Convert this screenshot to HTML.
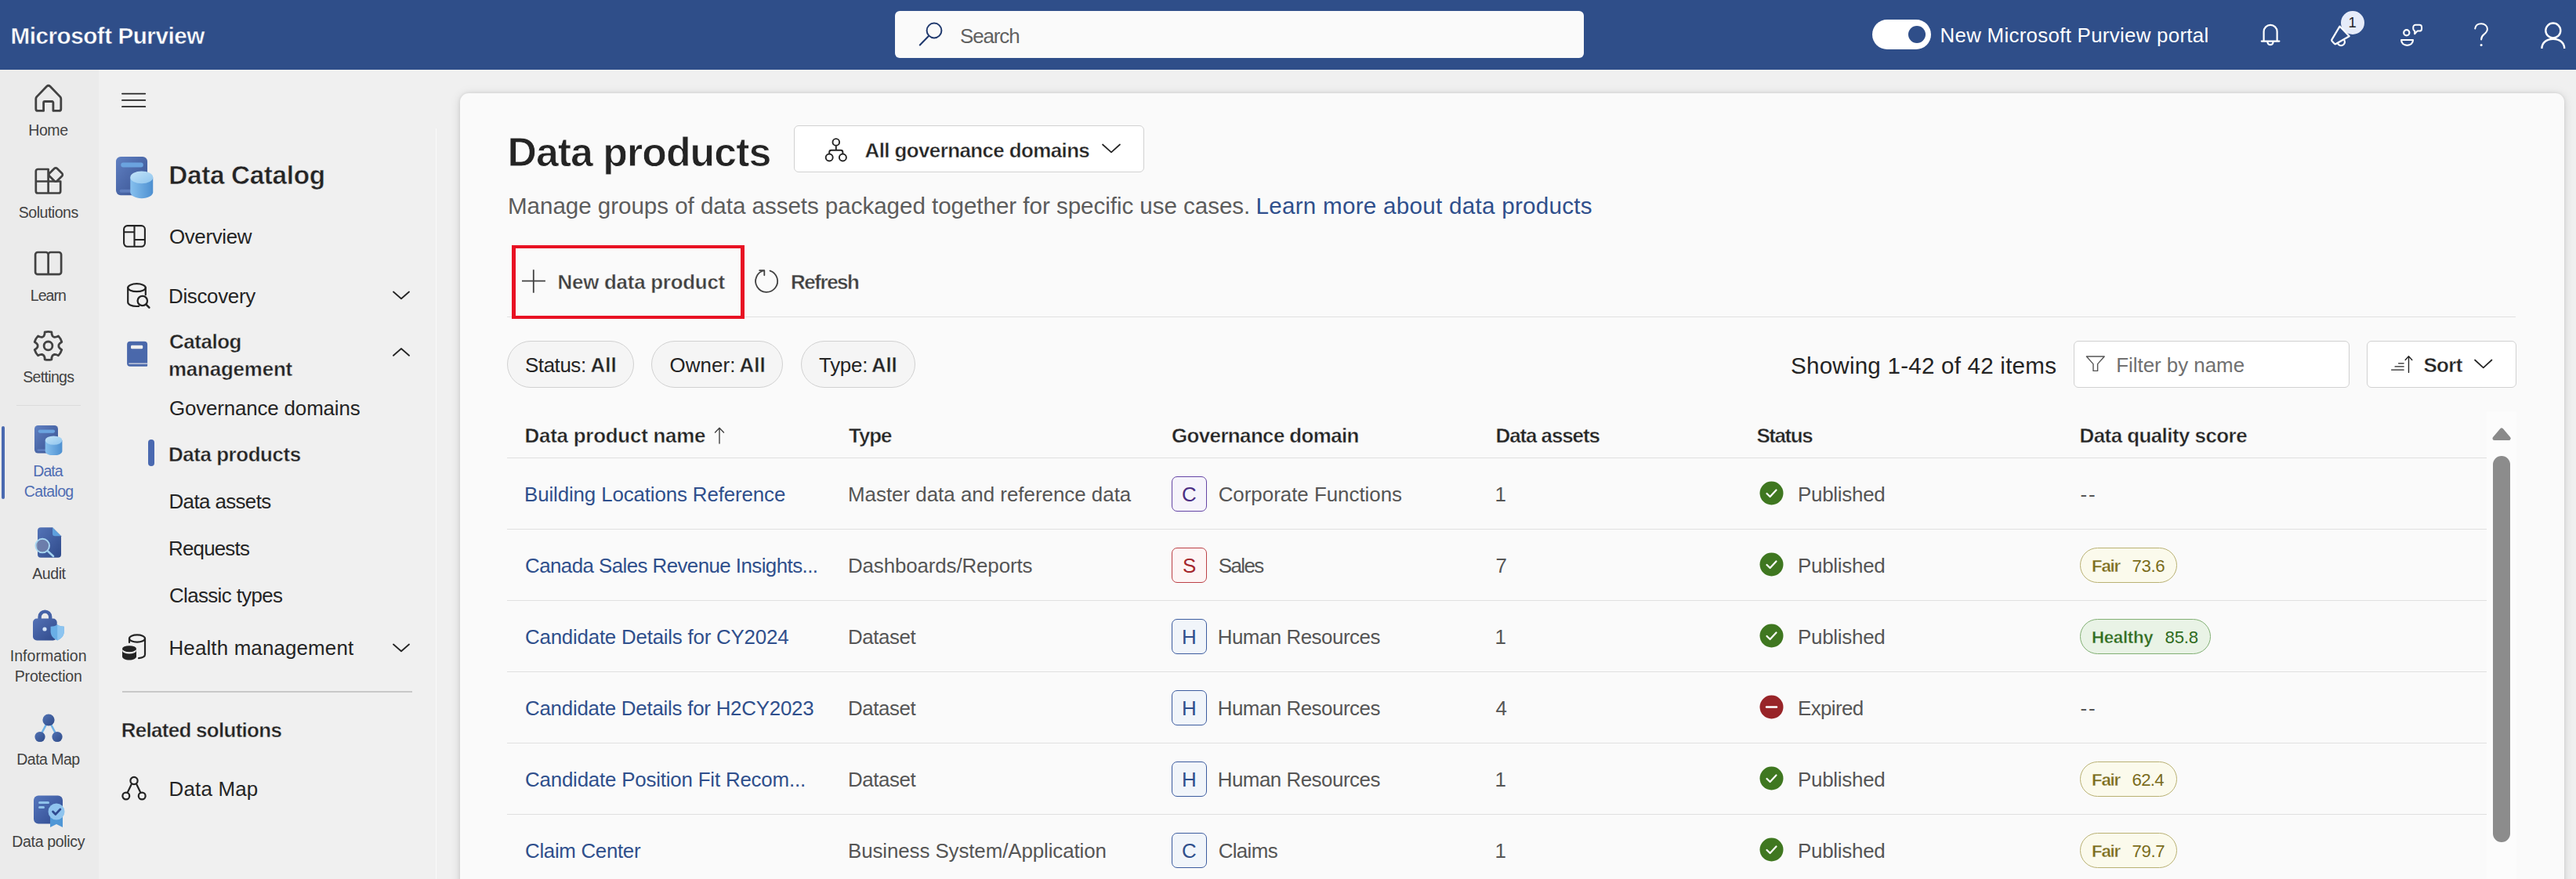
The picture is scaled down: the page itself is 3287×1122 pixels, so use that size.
<!DOCTYPE html>
<html lang="en"><head><meta charset="utf-8"><title>Data products - Microsoft Purview</title>
<style>
html,body{margin:0;padding:0;}
body{width:3287px;height:1122px;overflow:hidden;position:relative;background:#f0f0f0;font-family:"Liberation Sans", sans-serif;}
.a{position:absolute;box-sizing:border-box;}
.t{position:absolute;white-space:nowrap;line-height:1;margin:0;font-weight:400;text-decoration:none;}
</style></head><body>
<header class="sec-header">
<div class="a" style="left:0px;top:0px;width:3287px;height:89px;background:#2f4e89;"></div>
<div class="a" style="left:1142px;top:14px;width:879px;height:60px;background:#fafafa;border-radius:6px;"></div>
<div class="a" style="left:2389px;top:25px;width:75px;height:38px;background:#fff;border-radius:19px;"></div>
<div class="a" style="left:2435px;top:33px;width:22px;height:22px;background:#2f4e89;border-radius:11px;"></div>
<div class="a" style="left:2987px;top:14px;width:30px;height:30px;background:#e6ecfa;border-radius:15px;"></div>
<svg class="a" style="left:1170.5px;top:26.2px;" width="34" height="34" viewBox="0 0 34 34" fill="none"><circle cx="21" cy="13" r="9.4" stroke="#213a6e" stroke-width="2"/><path d="M14.200 19.800 L2.800 31.400" stroke="#213a6e" stroke-width="2.1" stroke-linecap="round"/></svg>
<svg class="a" style="left:2880px;top:26px;" width="34" height="36" viewBox="2880 26 34 36" fill="none"><path d="M2888.6 52.600 V40.4 a8.500 8.500 0 0 1 17 0 V52.600 M2885.8 52.600 H2908.4 M2893.4 53.6 a3.600 3.600 0 0 0 7.200 0" stroke="#fff" stroke-width="2.2" stroke-linejoin="round" stroke-linecap="round"/></svg>
<svg class="a" style="left:2968px;top:26px;" width="36" height="38" viewBox="2968 26 36 38" fill="none"><path d="M2985.5 33.6 L2997.7 46.300 L2980.600 56.0 a1.600 1.600 0 0 1-2.100-.5 L2975.5 52.2 a1.600 1.600 0 0 1-.1-1.600 Z M2983 55.2 a4.600 4.600 0 0 0 8.600-3.4" stroke="#fff" stroke-width="2.2" stroke-linejoin="round" stroke-linecap="round"/></svg>
<svg class="a" style="left:3058px;top:26px;" width="38" height="38" viewBox="3058 26 38 38" fill="none"><circle cx="3070.8" cy="41.8" r="3.600" stroke="#fff" stroke-width="2.2"/><path d="M3064.100 51 H3079 c0 4.200-3.200 6.800-7.450 6.800 s-7.450-2.600-7.450-6.800z" stroke="#fff" stroke-width="2.2" stroke-linejoin="round"/><path d="M3082.200 31.800 h5 a2.900 2.900 0 0 1 2.900 2.900 v2 a2.900 2.900 0 0 1-2.900 2.900 h-2.700 l-3.300 3.600 v-3.800 a2.900 2.900 0 0 1-1.900-2.700 v-2 a2.900 2.900 0 0 1 2.900-2.900z" stroke="#fff" stroke-width="2" stroke-linejoin="round"/></svg>
<svg class="a" style="left:3154px;top:27px;" width="24" height="34" viewBox="0 0 24 34" fill="none"><path d="M4.200 9.500 c.6-3.800 3.800-6.200 7.900-6.200 c4.500 0 7.800 2.800 7.800 6.800 c0 3.400-2 5-4.300 6.800 c-2.300 1.800-3.500 3.200-3.500 6.600" stroke="#fff" stroke-width="2" stroke-linecap="round"/><circle cx="12.100" cy="30.600" r="1.500" fill="#fff"/></svg>
<svg class="a" style="left:3238px;top:24px;" width="40" height="42" viewBox="3238 24 40 42" fill="none"><circle cx="3257.8" cy="39" r="9.500" stroke="#fff" stroke-width="2.4"/><path d="M3243.400 62 c0-7.600 6.200-12.200 14.400-12.200 s14.400 4.600 14.400 12.200" stroke="#fff" stroke-width="2.4" stroke-linecap="butt"/></svg>
<span class="t" id="t0" style="left:13.60px;top:31.00px;font-size:29.6px;color:#fff;font-weight:700;-webkit-text-stroke:0.47px #2f4e89;letter-spacing:-0.456px;">Microsoft Purview</span>
<span class="t" id="t1" style="left:1225.00px;top:34.00px;font-size:25.9px;color:#616161;letter-spacing:-1.100px;">Search</span>
<span class="t" id="t2" style="left:2475.50px;top:33.00px;font-size:25.9px;color:#fff;letter-spacing:0.278px;">New Microsoft Purview portal</span>
<span class="t" id="t3" style="left:2996.50px;top:20.00px;font-size:18.5px;color:#242424;">1</span>
</header>
<nav class="sec-rail">
<div class="a" style="left:0px;top:89px;width:126px;height:1033px;background:#ebebeb;"></div>
<div class="a" style="left:21px;top:517px;width:82px;height:1px;background:#dcdcdc;"></div>
<div class="a" style="left:2px;top:544px;width:4px;height:93px;background:#4a69b0;border-radius:2px;"></div>
<svg class="a" style="left:40px;top:104px;" width="46" height="42" viewBox="40 104 46 42" fill="none"><path d="M55.6 141.4 H48.3 a2.5 2.5 0 0 1-2.5-2.5 V126 a3.4 3.4 0 0 1 1.2-2.6 L59.6 110.3 a3.3 3.3 0 0 1 4.4 0 L76.6 123.4 a3.4 3.4 0 0 1 1.2 2.6 V138.9 a2.5 2.5 0 0 1-2.5 2.5 H67.9 V131 a1.5 1.5 0 0 0-1.5-1.5 h-9.3 a1.5 1.5 0 0 0-1.5 1.5 Z" stroke="#424242" stroke-width="2.8" stroke-linejoin="round"/></svg>
<svg class="a" style="left:40px;top:208px;" width="46" height="44" viewBox="40 208 46 44" fill="none"><path d="M45.8 218.6 a2.6 2.6 0 0 1 2.6-2.6 h13.2 v15.5 h-15.8 z M45.8 231.5 h15.8 v15 H48.4 a2.6 2.6 0 0 1-2.6-2.6 z M61.6 231.5 h15.6 v12.4 a2.6 2.6 0 0 1-2.6 2.6 H61.6 z" stroke="#424242" stroke-width="2.7" stroke-linejoin="round"/><path d="M69.4 215 a2.4 2.4 0 0 1 3.4 0 l6.3 6.3 a2.4 2.4 0 0 1 0 3.4 l-6.3 6.3 a2.4 2.4 0 0 1-3.4 0 l-6.3-6.3 a2.4 2.4 0 0 1 0-3.4 z" stroke="#424242" stroke-width="2.7" fill="#ebebeb" stroke-linejoin="round"/></svg>
<svg class="a" style="left:40px;top:316px;" width="46" height="40" viewBox="40 316 46 40" fill="none"><path d="M61.6 323 V350.2 M45.1 325 a3 3 0 0 1 3-3 H58.6 a3 3 0 0 1 3 3 a3 3 0 0 1 3-3 h10.5 a3 3 0 0 1 3 3 V347.2 a3 3 0 0 1-3 3 H48.1 a3 3 0 0 1-3-3 z" stroke="#424242" stroke-width="2.7" stroke-linejoin="round"/></svg>
<svg class="a" style="left:38px;top:418px;" width="48" height="48" viewBox="38 418 48 48" fill="none"><path d="M55.97 428.98 Q57.17 427.25 57.15 423.93 A18.0 18.0 0 0 1 65.85 423.93 Q65.83 427.25 67.03 428.98 A8.43 8.43 0 0 0 69.49 430.40 L69.49 430.40 Q71.59 430.58 74.45 428.90 A18.0 18.0 0 0 1 78.80 436.44 Q75.92 438.07 75.03 439.98 A8.43 8.43 0 0 0 75.03 442.82 L75.03 442.82 Q75.92 444.73 78.80 446.36 A18.0 18.0 0 0 1 74.45 453.90 Q71.59 452.22 69.49 452.40 A8.43 8.43 0 0 0 67.03 453.82 L67.03 453.82 Q65.83 455.55 65.85 458.87 A18.0 18.0 0 0 1 57.15 458.87 Q57.17 455.55 55.97 453.82 A8.43 8.43 0 0 0 53.51 452.40 L53.51 452.40 Q51.41 452.22 48.55 453.90 A18.0 18.0 0 0 1 44.20 446.36 Q47.08 444.73 47.97 442.82 A8.43 8.43 0 0 0 47.97 439.98 L47.97 439.98 Q47.08 438.07 44.20 436.44 A18.0 18.0 0 0 1 48.55 428.90 Q51.41 430.58 53.51 430.40 A8.43 8.43 0 0 0 55.97 428.98 Z" stroke="#424242" stroke-width="2.8" stroke-linejoin="round"/><circle cx="61.5" cy="441.4" r="5.4" stroke="#424242" stroke-width="2.8"/></svg>
<svg class="a" style="left:44.3px;top:542.6px;" width="35.6" height="38.6" viewBox="0 0 35.6 38.6" preserveAspectRatio="none" fill="none"><defs><linearGradient id="gra" x1="0" y1="0" x2="1" y2="1"><stop offset="0" stop-color="#6080c2"/><stop offset="1" stop-color="#36508f"/></linearGradient><linearGradient id="grb" x1="0" y1="0" x2="1" y2="0"><stop offset="0" stop-color="#86c0ee"/><stop offset="1" stop-color="#4d8fd0"/></linearGradient><linearGradient id="grc" x1="0" y1="0" x2="1" y2="1"><stop offset="0" stop-color="#c4e4f8"/><stop offset="1" stop-color="#8ec4ee"/></linearGradient></defs><rect x="0" y="0" width="30" height="35.6" rx="4.5" fill="url(#gra)"/><rect x="4.7" y="5.4" width="21.4" height="4.3" rx="2.1" fill="#6ba3df"/><rect x="3.4" y="30.2" width="14" height="2.8" rx="1.4" fill="#5e7dbd"/><path d="M13.7 19.1 v13.6 c0 3.1 4.85 5.7 10.85 5.7 s10.85-2.6 10.85-5.7 v-13.6z" fill="url(#grb)"/><ellipse cx="24.55" cy="19.1" rx="10.85" ry="5.7" fill="url(#grc)"/></svg>
<svg class="a" style="left:40px;top:670px;" width="44" height="46" viewBox="40 670 44 46" fill="none"><defs><linearGradient id="ga1" x1="0" y1="0" x2="1" y2="1"><stop offset="0" stop-color="#5474b8"/><stop offset="1" stop-color="#2f4a8a"/></linearGradient></defs><path d="M52 673.2 h15 l11 11 v23.5 a4 4 0 0 1-4 4 H52 a4 4 0 0 1-4-4 V677.2 a4 4 0 0 1 4-4z" fill="url(#ga1)"/><path d="M67 673.2 l11 11 h-8 a3 3 0 0 1-3-3z" fill="#5e9fdc"/><circle cx="54.2" cy="696.6" r="8.8" fill="#7383ab" fill-opacity=".85" stroke="#a9d8f2" stroke-width="1.9"/><path d="M60.9 703.4 L68 710" stroke="#a2d2f0" stroke-width="2.6" stroke-linecap="round"/></svg>
<svg class="a" style="left:38px;top:774px;" width="48" height="48" viewBox="38 774 48 48" fill="none"><defs><linearGradient id="gi1" x1="0" y1="0" x2="1" y2="1"><stop offset="0" stop-color="#5472b6"/><stop offset="1" stop-color="#2f498a"/></linearGradient></defs><path d="M50.6 792 v-4.6 a6.8 6.8 0 0 1 13.6 0 v4.6" stroke="#4562a6" stroke-width="4.4" fill="none"/><rect x="42" y="789.5" width="30.7" height="28" rx="5" fill="url(#gi1)"/><circle cx="57" cy="803" r="2.6" fill="#d5e6f8"/><path d="M73.2 797.3 c2.8 1.8 5.6 2.4 8.6 2.4 v6.6 c0 5-3.6 9-8.6 11.2 c-5-2.2-8.6-6.2-8.6-11.2 v-6.6 c3 0 5.800-.6 8.6-2.400z" fill="#69aee6"/><path d="M73.2 797.3 c2.8 1.8 5.6 2.4 8.6 2.4 v6.6 c0 5-3.6 9-8.6 11.2z" fill="#8cc4f0"/></svg>
<svg class="a" style="left:43px;top:910px;" width="38" height="38" viewBox="0 0 38 38" fill="none"><defs><linearGradient id="gm1" x1="0" y1="0" x2="1" y2="1"><stop offset="0" stop-color="#5273b4"/><stop offset="1" stop-color="#2f4a88"/></linearGradient></defs><path d="M19 9 L8 30 M19 9 L30 30" stroke="#6fb1e6" stroke-width="2.6"/><circle cx="19" cy="9" r="7.6" fill="url(#gm1)"/><circle cx="8" cy="30.5" r="6.6" fill="url(#gm1)"/><circle cx="30" cy="30.5" r="6.6" fill="url(#gm1)"/></svg>
<svg class="a" style="left:43px;top:1015px;" width="42" height="42" viewBox="0 0 42 42" fill="none"><defs><linearGradient id="gp1" x1="0" y1="0" x2="1" y2="1"><stop offset="0" stop-color="#5576bd"/><stop offset="1" stop-color="#2f4a8f"/></linearGradient></defs><rect x="0" y="0.5" width="37" height="36" rx="6" fill="url(#gp1)"/><rect x="6" y="8" width="14" height="3" rx="1.5" fill="#8fc1ea"/><rect x="6" y="14" width="8" height="3" rx="1.5" fill="#8fc1ea"/><path d="M21 28 v13 l8-4 l8 4 v-13z" fill="#4f97d6"/><circle cx="29" cy="21" r="10.5" fill="#8fc4ee"/><path d="M24.5 21 l3.4 3.4 l6-6.4" stroke="#2f4a8f" stroke-width="2.8" fill="none" stroke-linecap="round" stroke-linejoin="round"/></svg>
<span class="t" id="t4" style="left:36.30px;top:157.00px;font-size:19.5px;color:#424242;letter-spacing:-0.433px;">Home</span>
<span class="t" id="t5" style="left:23.80px;top:262.00px;font-size:19.5px;color:#424242;letter-spacing:-0.475px;">Solutions</span>
<span class="t" id="t6" style="left:38.80px;top:368.00px;font-size:19.5px;color:#424242;letter-spacing:-0.950px;">Learn</span>
<span class="t" id="t7" style="left:29.30px;top:472.00px;font-size:19.5px;color:#424242;letter-spacing:-0.686px;">Settings</span>
<span class="t" id="t8" style="left:42.30px;top:592.00px;font-size:19.5px;color:#4f6db3;letter-spacing:-0.933px;">Data</span>
<span class="t" id="t9" style="left:30.80px;top:618.00px;font-size:19.5px;color:#4f6db3;letter-spacing:-0.633px;">Catalog</span>
<span class="t" id="t10" style="left:41.30px;top:723.00px;font-size:19.5px;color:#424242;letter-spacing:-0.450px;">Audit</span>
<span class="t" id="t11" style="left:12.80px;top:828.00px;font-size:19.5px;color:#424242;letter-spacing:0.020px;">Information</span>
<span class="t" id="t12" style="left:18.80px;top:854.00px;font-size:19.5px;color:#424242;letter-spacing:-0.200px;">Protection</span>
<span class="t" id="t13" style="left:21.30px;top:960.00px;font-size:19.5px;color:#424242;letter-spacing:-0.543px;">Data Map</span>
<span class="t" id="t14" style="left:15.30px;top:1065.00px;font-size:19.5px;color:#424242;letter-spacing:-0.330px;">Data policy</span>
</nav>
<nav class="sec-nav">
<div class="a" style="left:556px;top:164px;width:1px;height:958px;background:#fafafa;"></div>
<div class="a" style="left:189px;top:561px;width:8px;height:34px;background:#4a69b0;border-radius:4px;"></div>
<div class="a" style="left:156px;top:882px;width:370px;height:2px;background:#c8c8c8;"></div>
<svg class="a" style="left:150px;top:112px;" width="42" height="30" viewBox="150 112 42 30" fill="none"><path d="M155.9 119.6 H185.3 M155.9 127.9 H185.3 M155.9 136.2 H185.3" stroke="#242424" stroke-width="1.7" stroke-linecap="round"/></svg>
<svg class="a" style="left:148.2px;top:200.4px;" width="47.53" height="53.46" viewBox="0 0 35.6 38.6" preserveAspectRatio="none" fill="none"><defs><linearGradient id="gna" x1="0" y1="0" x2="1" y2="1"><stop offset="0" stop-color="#6080c2"/><stop offset="1" stop-color="#36508f"/></linearGradient><linearGradient id="gnb" x1="0" y1="0" x2="1" y2="0"><stop offset="0" stop-color="#86c0ee"/><stop offset="1" stop-color="#4d8fd0"/></linearGradient><linearGradient id="gnc" x1="0" y1="0" x2="1" y2="1"><stop offset="0" stop-color="#c4e4f8"/><stop offset="1" stop-color="#8ec4ee"/></linearGradient></defs><rect x="0" y="0" width="30" height="35.6" rx="4.5" fill="url(#gna)"/><rect x="4.7" y="5.4" width="21.4" height="4.3" rx="2.1" fill="#6ba3df"/><rect x="3.4" y="30.2" width="14" height="2.8" rx="1.4" fill="#5e7dbd"/><path d="M13.7 19.1 v13.6 c0 3.1 4.85 5.7 10.85 5.7 s10.85-2.6 10.85-5.7 v-13.6z" fill="url(#gnb)"/><ellipse cx="24.55" cy="19.1" rx="10.85" ry="5.7" fill="url(#gnc)"/></svg>
<svg class="a" style="left:155.6px;top:286px;" width="31" height="31" viewBox="0 0 31 31" fill="none"><rect x="2.1" y="2.1" width="26.8" height="26.6" rx="4.4" stroke="#242424" stroke-width="2.1"/><path d="M15.5 2.1 V28.7 M2.1 10.3 H15.5 M15.5 20 H28.9" stroke="#242424" stroke-width="2.1"/></svg>
<svg class="a" style="left:158px;top:357px;" width="38" height="40" viewBox="158 357 38 40" fill="none"><ellipse cx="174.5" cy="367.2" rx="11.3" ry="5" stroke="#242424" stroke-width="2.2"/><path d="M163.2 367.2 V385.8 c0 2.9 4.6 5.2 11.300 5.2 c1 0 1.8-.04 2.6-.13 M185.800 367.2 V376.300" stroke="#242424" stroke-width="2.2" stroke-linecap="round"/><circle cx="181.8" cy="384" r="6.2" stroke="#242424" stroke-width="2.3" fill="#f0f0f0"/><path d="M186.4 388.600 L190.4 392.600" stroke="#242424" stroke-width="2.5" stroke-linecap="round"/></svg>
<svg class="a" style="left:499.5px;top:370px;" width="24" height="14.3" viewBox="0 0 24 14.3" fill="none"><path d="M2 2.5 L12.0 11.3 L22 2.5" stroke="#242424" stroke-width="1.8" stroke-linecap="round" stroke-linejoin="round"/></svg>
<svg class="a" style="left:160px;top:434px;" width="30" height="36" viewBox="160 434 30 36" fill="none"><path d="M162.1 439.7 a4 4 0 0 1 4-4 h18 a4 4 0 0 1 4 4 V466.7 a1 1 0 0 1-1 1 H166.1 a4 4 0 0 1-4-4z" fill="#4a68ab"/><rect x="167" y="440.8" width="15.2" height="4.5" rx="1.4" fill="#f0f0f0"/><path d="M164.300 464.1 H188.1" stroke="#f0f0f0" stroke-width="1.1"/></svg>
<svg class="a" style="left:499.5px;top:442.2px;" width="24" height="14.3" viewBox="0 0 24 14.3" fill="none"><path d="M2 11.8 L12.0 3 L22 11.8" stroke="#242424" stroke-width="1.8" stroke-linecap="round" stroke-linejoin="round"/></svg>
<svg class="a" style="left:154px;top:808px;" width="34" height="36" viewBox="0 0 34 36" fill="none"><path d="M11 12 V7 M31 7 V27.5 c0 2.4-3.4 4-8 4.6" stroke="#242424" stroke-width="2.2" stroke-linecap="round"/><ellipse cx="21" cy="7" rx="10" ry="4.6" stroke="#242424" stroke-width="2.2"/><path d="M2 21 v9 c0 2.6 4 4.6 9 4.6 s9-2 9-4.6 v-9 c0 2.6-4 4.4-9 4.4 s-9-1.8-9-4.4z" fill="#242424"/><ellipse cx="11" cy="20.2" rx="9" ry="4" fill="#242424"/><path d="M2.6 22.5 c1 2 4.4 3.3 8.4 3.3 s7.4-1.3 8.4-3.3" stroke="#f0f0f0" stroke-width="1.6"/></svg>
<svg class="a" style="left:499.5px;top:819.8px;" width="24" height="14.3" viewBox="0 0 24 14.3" fill="none"><path d="M2 2.5 L12.0 11.3 L22 2.5" stroke="#242424" stroke-width="1.8" stroke-linecap="round" stroke-linejoin="round"/></svg>
<svg class="a" style="left:154px;top:989px;" width="34" height="34" viewBox="0 0 34 34" fill="none"><path d="M14.5 10.5 L8.5 23 M19.5 10.5 L25.5 23" stroke="#242424" stroke-width="2.2"/><circle cx="17" cy="7.5" r="4.6" stroke="#242424" stroke-width="2.2"/><circle cx="6.8" cy="27" r="4.4" stroke="#242424" stroke-width="2.2"/><circle cx="27.2" cy="27" r="4.4" stroke="#242424" stroke-width="2.2"/></svg>
<h2 class="t" id="t15" style="left:215.30px;top:207.00px;font-size:33.3px;color:#242424;font-weight:700;-webkit-text-stroke:0.53px #f0f0f0;letter-spacing:-0.345px;">Data Catalog</h2>
<span class="t" id="t16" style="left:216.00px;top:290.00px;font-size:25.9px;color:#242424;letter-spacing:-0.357px;">Overview</span>
<span class="t" id="t17" style="left:215.00px;top:366.00px;font-size:25.9px;color:#242424;letter-spacing:-0.312px;">Discovery</span>
<span class="t" id="t18" style="left:216.00px;top:424.00px;font-size:25.9px;color:#242424;font-weight:700;-webkit-text-stroke:0.41px #f0f0f0;letter-spacing:-0.417px;">Catalog</span>
<span class="t" id="t19" style="left:215.00px;top:459.00px;font-size:25.9px;color:#242424;font-weight:700;-webkit-text-stroke:0.41px #f0f0f0;letter-spacing:-0.167px;">management</span>
<span class="t" id="t20" style="left:216.00px;top:509.00px;font-size:25.9px;color:#242424;letter-spacing:-0.147px;">Governance domains</span>
<span class="t" id="t21" style="left:215.00px;top:568.00px;font-size:25.9px;color:#242424;font-weight:700;-webkit-text-stroke:0.41px #f0f0f0;letter-spacing:-0.417px;">Data products</span>
<span class="t" id="t22" style="left:215.50px;top:628.00px;font-size:25.9px;color:#242424;letter-spacing:-0.600px;">Data assets</span>
<span class="t" id="t23" style="left:215.00px;top:688.00px;font-size:25.9px;color:#242424;letter-spacing:-0.786px;">Requests</span>
<span class="t" id="t24" style="left:216.00px;top:748.00px;font-size:25.9px;color:#242424;letter-spacing:-0.625px;">Classic types</span>
<span class="t" id="t25" style="left:215.50px;top:815.00px;font-size:25.9px;color:#242424;letter-spacing:0.156px;">Health management</span>
<span class="t" id="t26" style="left:154.80px;top:920.00px;font-size:25.9px;color:#242424;font-weight:700;-webkit-text-stroke:0.41px #f0f0f0;letter-spacing:-0.675px;">Related solutions</span>
<span class="t" id="t27" style="left:215.50px;top:995.00px;font-size:25.9px;color:#242424;letter-spacing:0.214px;">Data Map</span>
</nav>
<main class="sec-main">
<div class="a" style="left:587px;top:119px;width:2685px;height:1020px;background:#fafafa;border-radius:11px 11px 0 0;box-shadow:0 0 4px rgba(0,0,0,.10),0 2px 14px rgba(0,0,0,.13);"></div>
<div class="a" style="left:1012.5px;top:160px;width:447px;height:59.5px;background:#fff;border:1px solid #d1d1d1;border-radius:6px;"></div>
<div class="a" style="left:647px;top:403.5px;width:2563px;height:1px;background:#e0e0e0;"></div>
<div class="a" style="left:653px;top:313px;width:297px;height:94px;border:4px solid #e81123;border-left-width:5px;border-right-width:5px;"></div>
<div class="a" style="left:647px;top:435px;width:161.5px;height:60px;background:#f5f5f5;border:1px solid #d1d1d1;border-radius:30px;"></div>
<div class="a" style="left:831px;top:435px;width:167.5px;height:60px;background:#f5f5f5;border:1px solid #d1d1d1;border-radius:30px;"></div>
<div class="a" style="left:1021.5px;top:435px;width:146.5px;height:60px;background:#f5f5f5;border:1px solid #d1d1d1;border-radius:30px;"></div>
<div class="a" style="left:2646px;top:435px;width:351.5px;height:59.5px;background:#fff;border:1px solid #d1d1d1;border-radius:6px;"></div>
<div class="a" style="left:3020px;top:435px;width:190.5px;height:59.5px;background:#fff;border:1px solid #d1d1d1;border-radius:6px;"></div>
<div class="a" style="left:647px;top:584px;width:2526px;height:1px;background:#e0e0e0;"></div>
<div class="a" style="left:647px;top:675px;width:2526px;height:1px;background:#e0e0e0;"></div>
<div class="a" style="left:1495px;top:607.7px;width:45px;height:45.5px;background:#f6f4fb;border:1px solid #6545a5;border-radius:7px;"></div>
<div class="a" style="left:647px;top:766px;width:2526px;height:1px;background:#e0e0e0;"></div>
<div class="a" style="left:1495px;top:698.7px;width:45px;height:45.5px;background:#fdf5f5;border:1px solid #bc4046;border-radius:7px;"></div>
<div class="a" style="left:2653.5px;top:699.4000000000001px;width:124px;height:45px;background:#fbfaec;border:1px solid #b9b173;border-radius:23px;"></div>
<div class="a" style="left:647px;top:857px;width:2526px;height:1px;background:#e0e0e0;"></div>
<div class="a" style="left:1495px;top:789.7px;width:45px;height:45.5px;background:#f1f5fa;border:1px solid #3c5c9f;border-radius:7px;"></div>
<div class="a" style="left:2653.5px;top:790.4000000000001px;width:167px;height:45px;background:#e9f3e6;border:1px solid #82b074;border-radius:23px;"></div>
<div class="a" style="left:647px;top:948px;width:2526px;height:1px;background:#e0e0e0;"></div>
<div class="a" style="left:1495px;top:880.7px;width:45px;height:45.5px;background:#f1f5fa;border:1px solid #3c5c9f;border-radius:7px;"></div>
<div class="a" style="left:647px;top:1039px;width:2526px;height:1px;background:#e0e0e0;"></div>
<div class="a" style="left:1495px;top:971.7px;width:45px;height:45.5px;background:#f1f5fa;border:1px solid #3c5c9f;border-radius:7px;"></div>
<div class="a" style="left:2653.5px;top:972.4000000000001px;width:124px;height:45px;background:#fbfaec;border:1px solid #b9b173;border-radius:23px;"></div>
<div class="a" style="left:647px;top:1130px;width:2526px;height:1px;background:#e0e0e0;"></div>
<div class="a" style="left:1495px;top:1062.7px;width:45px;height:45.5px;background:#f1f5fa;border:1px solid #3c5c9f;border-radius:7px;"></div>
<div class="a" style="left:2653.5px;top:1063.4px;width:124px;height:45px;background:#fbfaec;border:1px solid #b9b173;border-radius:23px;"></div>
<div class="a" style="left:3173px;top:525px;width:38px;height:600px;background:#fcfcfc;"></div>
<div class="a" style="left:3181px;top:582px;width:22px;height:493px;background:#8c8c8c;border-radius:11px;"></div>
<svg class="a" style="left:1048px;top:172px;" width="38" height="38" viewBox="1048 172 38 38" fill="none"><path d="M1066.800 186.2 V191.800 M1058.200 196.200 V194.300 a2.500 2.500 0 0 1 2.500-2.500 h12.200 a2.500 2.500 0 0 1 2.500 2.500 v1.900" stroke="#242424" stroke-width="1.9"/><circle cx="1066.800" cy="181.400" r="4.300" stroke="#242424" stroke-width="1.9"/><circle cx="1058.200" cy="201" r="4.500" stroke="#242424" stroke-width="1.9"/><circle cx="1075.400" cy="201" r="4.500" stroke="#242424" stroke-width="1.9"/></svg>
<svg class="a" style="left:1404.8px;top:182.2px;" width="26" height="15.3" viewBox="0 0 26 15.3" fill="none"><path d="M2 2.5 L13.0 12.3 L24 2.5" stroke="#242424" stroke-width="1.7" stroke-linecap="round" stroke-linejoin="round"/></svg>
<svg class="a" style="left:660px;top:338px;" width="42" height="42" viewBox="660 338 42 42" fill="none"><path d="M666 358.7 H695.9 M680.8 344.2 V373.8" stroke="#424242" stroke-width="1.8"/></svg>
<svg class="a" style="left:958px;top:338px;" width="42" height="42" viewBox="958 338 42 42" fill="none"><path d="M982.5 345.6 A14 14 0 1 1 975.3 345.2 M969.2 345.2 H975.3 V351.3" stroke="#424242" stroke-width="1.8" stroke-linecap="round" stroke-linejoin="round"/></svg>
<svg class="a" style="left:2656px;top:449px;" width="36" height="32" viewBox="2656 449 36 32" fill="none"><path d="M2662.400 455 H2685.200 L2676.600 464.600 V473.400 H2671 V464.600 Z" stroke="#555" stroke-width="1.4" stroke-linejoin="round"/></svg>
<svg class="a" style="left:3045px;top:449px;" width="36" height="32" viewBox="3045 449 36 32" fill="none"><path d="M3073.500 475.400 V455 M3069.200 459.400 L3073.500 454.800 L3077.800 459.400" stroke="#242424" stroke-width="1.4" stroke-linecap="round" stroke-linejoin="round"/><path d="M3060.600 463.800 H3067.200 M3056.100 467.900 H3067.200 M3051.600 472.100 H3067.200" stroke="#242424" stroke-width="1.3" stroke-linecap="round"/></svg>
<svg class="a" style="left:3156.2px;top:457px;" width="25.5" height="15.3" viewBox="0 0 25.5 15.3" fill="none"><path d="M2 2.5 L12.75 12.3 L23.5 2.5" stroke="#242424" stroke-width="1.7" stroke-linecap="round" stroke-linejoin="round"/></svg>
<svg class="a" style="left:910px;top:544px;" width="16" height="24" viewBox="0 0 16 24" fill="none"><path d="M8 22 V2.5 M2.5 8 L8 2.2 L13.5 8" stroke="#424242" stroke-width="1.4" stroke-linecap="round" stroke-linejoin="round"/></svg>
<svg class="a" style="left:2244.7px;top:614.0px;" width="31" height="31" viewBox="0 0 31 31" fill="none"><circle cx="15.5" cy="15.5" r="15" fill="#3f7720"/><path d="M9.5 16 L13.6 20 L21.5 11.5" stroke="#fff" stroke-width="2.2" stroke-linecap="round" stroke-linejoin="round"/></svg>
<svg class="a" style="left:2244.7px;top:705.0px;" width="31" height="31" viewBox="0 0 31 31" fill="none"><circle cx="15.5" cy="15.5" r="15" fill="#3f7720"/><path d="M9.5 16 L13.6 20 L21.5 11.5" stroke="#fff" stroke-width="2.2" stroke-linecap="round" stroke-linejoin="round"/></svg>
<svg class="a" style="left:2244.7px;top:796.0px;" width="31" height="31" viewBox="0 0 31 31" fill="none"><circle cx="15.5" cy="15.5" r="15" fill="#3f7720"/><path d="M9.5 16 L13.6 20 L21.5 11.5" stroke="#fff" stroke-width="2.2" stroke-linecap="round" stroke-linejoin="round"/></svg>
<svg class="a" style="left:2244.7px;top:887.0px;" width="31" height="31" viewBox="0 0 31 31" fill="none"><circle cx="15.5" cy="15.5" r="15" fill="#982428"/><path d="M9 15.5 H22" stroke="#fff" stroke-width="2.4" stroke-linecap="round"/></svg>
<svg class="a" style="left:2244.7px;top:978.0px;" width="31" height="31" viewBox="0 0 31 31" fill="none"><circle cx="15.5" cy="15.5" r="15" fill="#3f7720"/><path d="M9.5 16 L13.6 20 L21.5 11.5" stroke="#fff" stroke-width="2.2" stroke-linecap="round" stroke-linejoin="round"/></svg>
<svg class="a" style="left:2244.7px;top:1069.0px;" width="31" height="31" viewBox="0 0 31 31" fill="none"><circle cx="15.5" cy="15.5" r="15" fill="#3f7720"/><path d="M9.5 16 L13.6 20 L21.5 11.5" stroke="#fff" stroke-width="2.2" stroke-linecap="round" stroke-linejoin="round"/></svg>
<svg class="a" style="left:3176px;top:542px;" width="32" height="24" viewBox="3176 542 32 24" fill="none"><path d="M3192.100 549 L3201.200 559.600 H3183 Z" fill="#8a8a8a" stroke="#8a8a8a" stroke-width="5" stroke-linejoin="round"/></svg>
<h1 class="t" id="t28" style="left:647.50px;top:169.00px;font-size:51.8px;color:#242424;font-weight:700;-webkit-text-stroke:0.83px #fafafa;letter-spacing:-0.958px;">Data products</h1>
<span class="t" id="t29" style="left:1103.50px;top:180.00px;font-size:25.9px;color:#242424;font-weight:700;-webkit-text-stroke:0.41px #ffffff;letter-spacing:-0.571px;">All governance domains</span>
<span class="t" id="t30" style="left:648.00px;top:248.00px;font-size:29.6px;color:#5c5c5c;letter-spacing:-0.051px;">Manage groups of data assets packaged together for specific use cases.</span>
<a class="t" href="#" id="t31" style="left:1602.50px;top:248.00px;font-size:29.6px;color:#2f4f8c;letter-spacing:0.276px;">Learn more about data products</a>
<span class="t" id="t32" style="left:711.50px;top:348.00px;font-size:25.9px;color:#404040;font-weight:700;-webkit-text-stroke:0.41px #fafafa;letter-spacing:-0.233px;">New data product</span>
<span class="t" id="t33" style="left:1009.00px;top:348.00px;font-size:25.9px;color:#404040;font-weight:700;-webkit-text-stroke:0.41px #fafafa;letter-spacing:-1.417px;">Refresh</span>
<span class="t" id="t34" style="left:670.00px;top:454.00px;font-size:25.9px;color:#242424;letter-spacing:-0.417px;">Status:</span>
<span class="t" id="t35" style="left:753.50px;top:454.00px;font-size:25.9px;color:#242424;font-weight:700;-webkit-text-stroke:0.41px #f5f5f5;">All</span>
<span class="t" id="t36" style="left:854.50px;top:454.00px;font-size:25.9px;color:#242424;letter-spacing:0.100px;">Owner:</span>
<span class="t" id="t37" style="left:943.50px;top:454.00px;font-size:25.9px;color:#242424;font-weight:700;-webkit-text-stroke:0.41px #f5f5f5;">All</span>
<span class="t" id="t38" style="left:1045.00px;top:454.00px;font-size:25.9px;color:#242424;letter-spacing:-0.250px;">Type:</span>
<span class="t" id="t39" style="left:1112.00px;top:454.00px;font-size:25.9px;color:#242424;font-weight:700;-webkit-text-stroke:0.41px #f5f5f5;letter-spacing:-0.250px;">All</span>
<span class="t" id="t40" style="left:2285.00px;top:452.00px;font-size:29.6px;color:#242424;letter-spacing:0.217px;">Showing 1-42 of 42 items</span>
<span class="t" id="t41" style="left:2700.30px;top:454.00px;font-size:25.9px;color:#707070;letter-spacing:-0.023px;">Filter by name</span>
<span class="t" id="t42" style="left:3092.50px;top:454.00px;font-size:25.9px;color:#242424;font-weight:700;-webkit-text-stroke:0.41px #ffffff;letter-spacing:-0.667px;">Sort</span>
<span class="t" id="t43" style="left:669.50px;top:544.00px;font-size:25.9px;color:#242424;font-weight:700;-webkit-text-stroke:0.41px #fafafa;letter-spacing:-0.219px;">Data product name</span>
<span class="t" id="t44" style="left:1083.00px;top:544.00px;font-size:25.9px;color:#242424;font-weight:700;-webkit-text-stroke:0.41px #fafafa;letter-spacing:-1.000px;">Type</span>
<span class="t" id="t45" style="left:1495.00px;top:544.00px;font-size:25.9px;color:#242424;font-weight:700;-webkit-text-stroke:0.41px #fafafa;letter-spacing:-0.594px;">Governance domain</span>
<span class="t" id="t46" style="left:1908.50px;top:544.00px;font-size:25.9px;color:#242424;font-weight:700;-webkit-text-stroke:0.41px #fafafa;letter-spacing:-1.050px;">Data assets</span>
<span class="t" id="t47" style="left:2241.50px;top:544.00px;font-size:25.9px;color:#242424;font-weight:700;-webkit-text-stroke:0.41px #fafafa;letter-spacing:-1.400px;">Status</span>
<span class="t" id="t48" style="left:2653.50px;top:544.00px;font-size:25.9px;color:#242424;font-weight:700;-webkit-text-stroke:0.41px #fafafa;letter-spacing:-0.529px;">Data quality score</span>
<a class="t" href="#" id="t49" style="left:669.00px;top:619.00px;font-size:25.9px;color:#2f4f8c;letter-spacing:-0.130px;">Building Locations Reference</a>
<span class="t" id="t50" style="left:1082.00px;top:619.00px;font-size:25.9px;color:#555555;">Master data and reference data</span>
<span class="t" id="t51" style="left:1508.00px;top:619.00px;font-size:25.9px;color:#4b2e83;">C</span>
<span class="t" id="t52" style="left:1554.70px;top:619.00px;font-size:25.9px;color:#555555;letter-spacing:-0.011px;">Corporate Functions</span>
<span class="t" id="t53" style="left:1907.50px;top:619.00px;font-size:25.9px;color:#555555;">1</span>
<span class="t" id="t54" style="left:2294.00px;top:619.00px;font-size:25.9px;color:#555555;letter-spacing:-0.250px;">Published</span>
<span class="t" id="t55" style="left:2654.50px;top:619.00px;font-size:25.9px;color:#555555;letter-spacing:1.800px;">--</span>
<a class="t" href="#" id="t56" style="left:670.00px;top:710.00px;font-size:25.9px;color:#2f4f8c;letter-spacing:-0.565px;">Canada Sales Revenue Insights...</a>
<span class="t" id="t57" style="left:1082.00px;top:710.00px;font-size:25.9px;color:#555555;letter-spacing:-0.118px;">Dashboards/Reports</span>
<span class="t" id="t58" style="left:1509.00px;top:710.00px;font-size:25.9px;color:#a4262c;">S</span>
<span class="t" id="t59" style="left:1554.70px;top:710.00px;font-size:25.9px;color:#555555;letter-spacing:-1.550px;">Sales</span>
<span class="t" id="t60" style="left:1908.50px;top:710.00px;font-size:25.9px;color:#555555;">7</span>
<span class="t" id="t61" style="left:2294.00px;top:710.00px;font-size:25.9px;color:#555555;letter-spacing:-0.250px;">Published</span>
<span class="t" id="t62" style="left:2669.00px;top:712.00px;font-size:22.2px;color:#7a6c1c;font-weight:700;-webkit-text-stroke:0.36px #fbfaec;letter-spacing:-1.167px;">Fair</span>
<span class="t" id="t63" style="left:2720.50px;top:712.00px;font-size:22.2px;color:#7a6c1c;letter-spacing:-0.333px;">73.6</span>
<a class="t" href="#" id="t64" style="left:670.00px;top:801.00px;font-size:25.9px;color:#2f4f8c;letter-spacing:-0.222px;">Candidate Details for CY2024</a>
<span class="t" id="t65" style="left:1082.00px;top:801.00px;font-size:25.9px;color:#555555;letter-spacing:-0.417px;">Dataset</span>
<span class="t" id="t66" style="left:1508.00px;top:801.00px;font-size:25.9px;color:#2f4f8c;">H</span>
<span class="t" id="t67" style="left:1553.70px;top:801.00px;font-size:25.9px;color:#555555;letter-spacing:-0.479px;">Human Resources</span>
<span class="t" id="t68" style="left:1907.50px;top:801.00px;font-size:25.9px;color:#555555;">1</span>
<span class="t" id="t69" style="left:2294.00px;top:801.00px;font-size:25.9px;color:#555555;letter-spacing:-0.250px;">Published</span>
<span class="t" id="t70" style="left:2669.00px;top:803.00px;font-size:22.2px;color:#2f6b1e;font-weight:700;-webkit-text-stroke:0.36px #e9f3e6;letter-spacing:-0.250px;">Healthy</span>
<span class="t" id="t71" style="left:2762.50px;top:803.00px;font-size:22.2px;color:#2f6b1e;letter-spacing:-0.167px;">85.8</span>
<a class="t" href="#" id="t72" style="left:670.00px;top:892.00px;font-size:25.9px;color:#2f4f8c;letter-spacing:-0.241px;">Candidate Details for H2CY2023</a>
<span class="t" id="t73" style="left:1082.00px;top:892.00px;font-size:25.9px;color:#555555;letter-spacing:-0.417px;">Dataset</span>
<span class="t" id="t74" style="left:1508.00px;top:892.00px;font-size:25.9px;color:#2f4f8c;">H</span>
<span class="t" id="t75" style="left:1553.70px;top:892.00px;font-size:25.9px;color:#555555;letter-spacing:-0.479px;">Human Resources</span>
<span class="t" id="t76" style="left:1908.50px;top:892.00px;font-size:25.9px;color:#555555;">4</span>
<span class="t" id="t77" style="left:2294.00px;top:892.00px;font-size:25.9px;color:#555555;letter-spacing:-0.617px;">Expired</span>
<span class="t" id="t78" style="left:2654.50px;top:892.00px;font-size:25.9px;color:#555555;letter-spacing:1.800px;">--</span>
<a class="t" href="#" id="t79" style="left:670.00px;top:983.00px;font-size:25.9px;color:#2f4f8c;letter-spacing:-0.200px;">Candidate Position Fit Recom...</a>
<span class="t" id="t80" style="left:1082.00px;top:983.00px;font-size:25.9px;color:#555555;letter-spacing:-0.417px;">Dataset</span>
<span class="t" id="t81" style="left:1508.00px;top:983.00px;font-size:25.9px;color:#2f4f8c;">H</span>
<span class="t" id="t82" style="left:1553.70px;top:983.00px;font-size:25.9px;color:#555555;letter-spacing:-0.479px;">Human Resources</span>
<span class="t" id="t83" style="left:1907.50px;top:983.00px;font-size:25.9px;color:#555555;">1</span>
<span class="t" id="t84" style="left:2294.00px;top:983.00px;font-size:25.9px;color:#555555;letter-spacing:-0.250px;">Published</span>
<span class="t" id="t85" style="left:2669.00px;top:985.00px;font-size:22.2px;color:#7a6c1c;font-weight:700;-webkit-text-stroke:0.36px #fbfaec;letter-spacing:-1.167px;">Fair</span>
<span class="t" id="t86" style="left:2720.50px;top:985.00px;font-size:22.2px;color:#7a6c1c;letter-spacing:-0.667px;">62.4</span>
<a class="t" href="#" id="t87" style="left:670.00px;top:1074.00px;font-size:25.9px;color:#2f4f8c;letter-spacing:-0.318px;">Claim Center</a>
<span class="t" id="t88" style="left:1082.00px;top:1074.00px;font-size:25.9px;color:#555555;letter-spacing:-0.096px;">Business System/Application</span>
<span class="t" id="t89" style="left:1508.00px;top:1074.00px;font-size:25.9px;color:#2f4f8c;">C</span>
<span class="t" id="t90" style="left:1554.70px;top:1074.00px;font-size:25.9px;color:#555555;letter-spacing:-0.640px;">Claims</span>
<span class="t" id="t91" style="left:1907.50px;top:1074.00px;font-size:25.9px;color:#555555;">1</span>
<span class="t" id="t92" style="left:2294.00px;top:1074.00px;font-size:25.9px;color:#555555;letter-spacing:-0.250px;">Published</span>
<span class="t" id="t93" style="left:2669.00px;top:1076.00px;font-size:22.2px;color:#7a6c1c;font-weight:700;-webkit-text-stroke:0.36px #fbfaec;letter-spacing:-1.167px;">Fair</span>
<span class="t" id="t94" style="left:2720.50px;top:1076.00px;font-size:22.2px;color:#7a6c1c;letter-spacing:-0.333px;">79.7</span>
</main>
</body></html>
